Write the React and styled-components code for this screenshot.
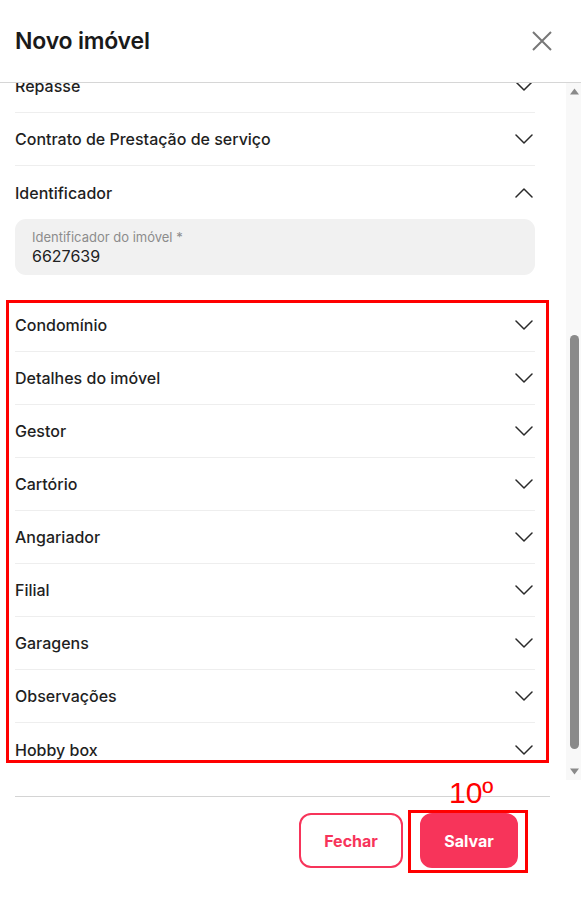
import { useLayoutEffect, useRef } from "react";
import styled, { createGlobalStyle } from "styled-components";

const GlobalStyle = createGlobalStyle`
  html, body {
    margin: 0;
    padding: 0;
    background: #ffffff;
  }
  body {
    font-family: Inter, "Noto Sans", "Liberation Sans", sans-serif;
    color: #1f1f1f;
  }
`;

const Modal = styled.div`
  width: 581px;
  height: 900px;
  display: flex;
  flex-direction: column;
  background: #ffffff;
`;

const Header = styled.div`
  height: 82px;
  display: flex;
  align-items: center;
  justify-content: space-between;
  padding: 0 28px 0 15px;
  border-bottom: 1px solid #d6d6d6;
  flex-shrink: 0;
`;

const Title = styled.h1`
  margin: 0;
  font-size: 23px;
  font-weight: 600;
  color: #1a1a1a;
  letter-spacing: -0.2px;
`;

const CloseButton = styled.button`
  border: none;
  background: none;
  padding: 0;
  width: 22px;
  height: 22px;
  display: flex;
  align-items: center;
  justify-content: center;
  cursor: pointer;
`;

const Body = styled.div`
  height: 697px;
  display: flex;
  flex-shrink: 0;
`;

const Scroll = styled.div`
  flex: 1;
  overflow: hidden;
`;

const Rail = styled.div`
  width: 15px;
  background: #f8f8f8;
  display: flex;
  flex-direction: column;
  align-items: center;
`;

const RailArrow = styled.div`
  height: 17px;
  width: 100%;
  display: flex;
  align-items: center;
  justify-content: center;
  flex-shrink: 0;
`;

const RailTrack = styled.div`
  flex: 1;
  width: 100%;
  display: flex;
  justify-content: center;
`;

const Thumb = styled.div`
  width: 9px;
  margin-left: 2px;
  background: #8a8a8a;
  border-radius: 5px;
`;

const Content = styled.div`
  padding: 0 31px 24px 15px;
`;

const Row = styled.div`
  height: 53px;
  box-sizing: border-box;
  display: flex;
  align-items: center;
  justify-content: space-between;
  padding-right: 2px;
  border-bottom: ${(p) => (p.$last || p.$open ? "none" : "1px solid #eeeeee")};
  font-size: 16px;
  font-weight: 500;
  color: #1f1f1f;
`;

const Panel = styled.div`
  padding-bottom: 24px;
`;

const Field = styled.div`
  height: 56px;
  box-sizing: border-box;
  background: #f1f1f1;
  border-radius: 11px;
  padding: 9px 17px;
  display: flex;
  flex-direction: column;
  justify-content: center;
`;

const FieldLabel = styled.span`
  font-size: 13px;
  color: #8c8c8c;
  line-height: 17px;
`;

const FieldValue = styled.span`
  font-size: 16px;
  color: #222222;
  line-height: 20px;
`;

const Group = styled.div`
  position: relative;
`;

const Highlight = styled.div`
  position: absolute;
  top: 1px;
  bottom: 13px;
  left: -9px;
  right: -14px;
  border: 3px solid #ff0000;
  pointer-events: none;
`;

const Footer = styled.div`
  margin: 16px 31px 0 15px;
  border-top: 1px solid #d4d4d4;
  padding: 16px 32px 0 0;
  display: flex;
  justify-content: flex-end;
  gap: 17px;
`;

const Button = styled.button`
  position: relative;
  height: 55px;
  width: ${(p) => (p.$primary ? "98px" : "104px")};
  box-sizing: border-box;
  padding: 0;
  border-radius: 12px;
  border: 2px solid #f7345a;
  background: ${(p) => (p.$primary ? "#f7345a" : "#ffffff")};
  color: ${(p) => (p.$primary ? "#ffffff" : "#f7345a")};
  font-family: Inter, "Liberation Sans", sans-serif;
  font-size: 16px;
  font-weight: 700;
  cursor: pointer;
`;

const Mark = styled.div`
  position: absolute;
  top: -5px;
  bottom: -7px;
  left: -14px;
  right: -12px;
  border: 3px solid #ff0000;
  pointer-events: none;
`;

const Step = styled.span`
  position: absolute;
  top: -39px;
  left: 27px;
  font-family: "Liberation Sans", Arial, sans-serif;
  font-size: 30px;
  font-weight: 400;
  color: #ff0000;
  line-height: 34px;
`;

function Chevron({ up }) {
  return (
    <svg width="18" height="18" viewBox="0 0 18 18" fill="none">
      <path
        d={up ? "M1 13 L9 5 L17 13" : "M1 5 L9 13 L17 5"}
        stroke="#2a2a2a"
        strokeWidth="1.5"
        strokeLinecap="round"
        strokeLinejoin="round"
      />
    </svg>
  );
}

function Triangle({ down }) {
  return (
    <svg width="9" height="7" viewBox="0 0 9 7" style={{ marginLeft: 2 }}>
      <path d={down ? "M0 0.5 H9 L4.5 6.5 Z" : "M0 6.5 H9 L4.5 0.5 Z"} fill="#8a8a8a" />
    </svg>
  );
}

const hidden = [
  "Dados do imóvel",
  "Endereço",
  "Proprietários",
  "Características",
  "Valores",
  "Comissão",
  "Documentos",
];

const marked = [
  "Condomínio",
  "Detalhes do imóvel",
  "Gestor",
  "Cartório",
  "Angariador",
  "Filial",
  "Garagens",
  "Observações",
  "Hobby box",
];

export default function App() {
  const scrollRef = useRef(null);

  useLayoutEffect(() => {
    if (scrollRef.current) scrollRef.current.scrollTop = 394;
  }, []);

  return (
    <>
      <GlobalStyle />
      <Modal>
        <Header>
          <Title>Novo imóvel</Title>
          <CloseButton aria-label="Fechar">
            <svg width="20" height="20" viewBox="0 0 20 20">
              <path d="M1 1 L19 19 M19 1 L1 19" stroke="#777777" strokeWidth="2" />
            </svg>
          </CloseButton>
        </Header>
        <Body>
          <Scroll ref={scrollRef}>
            <Content>
              {hidden.map((name) => (
                <Row key={name}>
                  {name}
                  <Chevron />
                </Row>
              ))}
              <Row>
                Repasse
                <Chevron />
              </Row>
              <Row>
                Contrato de Prestação de serviço
                <Chevron />
              </Row>
              <Row $open>
                Identificador
                <Chevron up />
              </Row>
              <Panel>
                <Field>
                  <FieldLabel>Identificador do imóvel *</FieldLabel>
                  <FieldValue>6627639</FieldValue>
                </Field>
              </Panel>
              <Group>
                {marked.map((name, i) => (
                  <Row key={name} $last={i === marked.length - 1}>
                    {name}
                    <Chevron />
                  </Row>
                ))}
                <Highlight />
              </Group>
            </Content>
          </Scroll>
          <Rail>
            <RailArrow>
              <Triangle />
            </RailArrow>
            <RailTrack>
              <Thumb style={{ marginTop: 235, height: 414 }} />
            </RailTrack>
            <RailArrow>
              <Triangle down />
            </RailArrow>
          </Rail>
        </Body>
        <Footer>
          <Button>Fechar</Button>
          <Button $primary>
            Salvar
            <Mark />
            <Step>10º</Step>
          </Button>
        </Footer>
      </Modal>
    </>
  );
}
